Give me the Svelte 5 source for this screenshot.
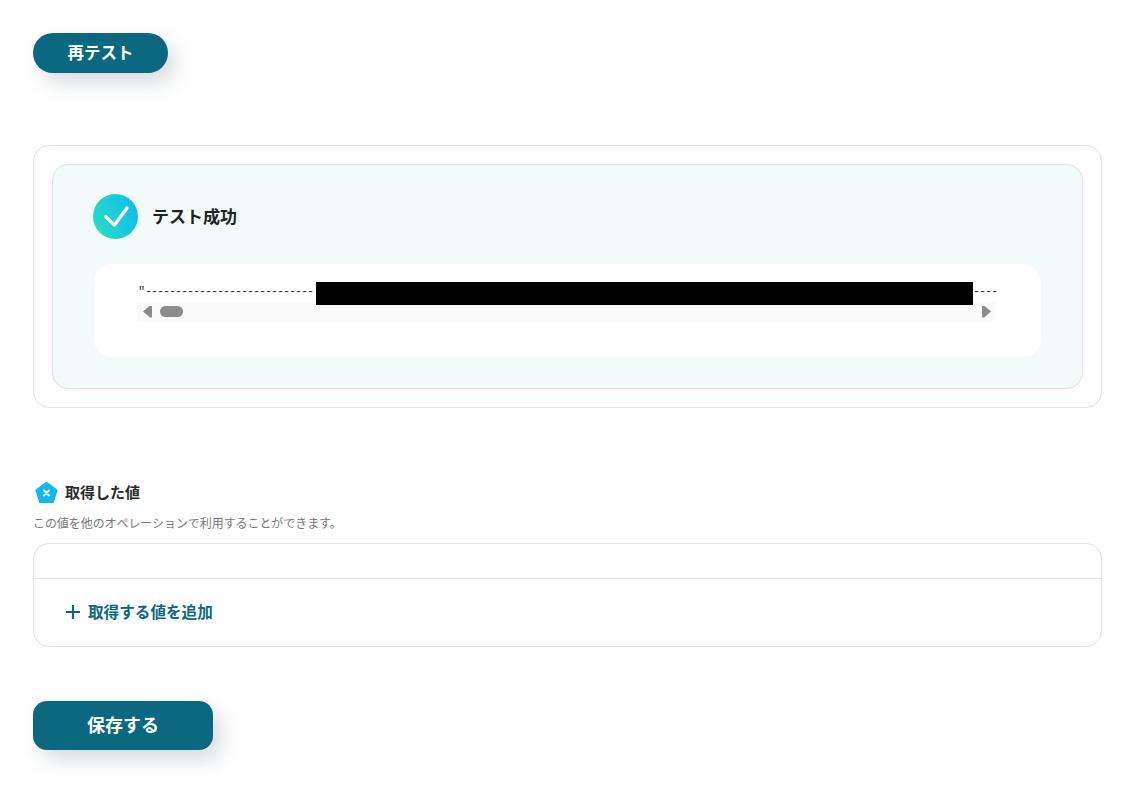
<script lang="ts">
  // 取得した値のリスト（テスト直後は空）
  let values: string[] = $state([]);
  const dashesLeft = "-".repeat(28);
  const dashesRight = "-".repeat(4);
</script>

<main class="page">
  <button class="btn retest">再テスト</button>

  <section class="result-card">
    <div class="result-inner">
      <div class="result-head">
        <svg class="check" viewBox="0 0 45 45" width="45" height="45" aria-hidden="true">
          <defs>
            <linearGradient id="ok" x1="0" y1="0.7" x2="1" y2="0.3">
              <stop offset="0" stop-color="#2bdcc4" />
              <stop offset="1" stop-color="#0fbcee" />
            </linearGradient>
          </defs>
          <circle cx="22.5" cy="22.5" r="22.5" fill="url(#ok)" />
          <path d="M12.7 22.7 L21.5 31 L34 14" fill="none" stroke="#fff" stroke-width="3.4" stroke-linecap="round" stroke-linejoin="round" />
        </svg>
        <h2>テスト成功</h2>
      </div>

      <div class="code-box">
        <div class="code-scroll">
          <div class="code-line">
            <span class="quote">"</span><span class="dash left-run">{dashesLeft}</span><span class="redacted"></span><span class="dash">{dashesRight}</span>
          </div>
          <div class="scrollbar">
            <span class="arrow left"></span>
            <span class="thumb"></span>
            <span class="arrow right"></span>
          </div>
        </div>
      </div>
    </div>
  </section>

  <section class="values">
    <div class="values-head">
      <svg viewBox="0 0 24 24" width="24" height="24" aria-hidden="true">
        <path d="M12.5 3.5 L22 10.5 L18.5 21.5 L6.5 21.5 L3 10.5 Z" fill="#12b9ee" stroke="#12b9ee" stroke-width="3" stroke-linejoin="round" />
        <path d="M10 10.5 L15 15.5 M15 10.5 L10 15.5" stroke="#fff" stroke-width="1.8" stroke-linecap="round" />
      </svg>
      <h3>取得した値</h3>
    </div>
    <p class="hint">この値を他のオペレーションで利用することができます。</p>

    <div class="values-box">
      <div class="values-list">
        {#each values as v}
          <div>{v}</div>
        {/each}
      </div>
      <div class="add-row">
        <svg viewBox="0 0 16 16" width="16" height="16" aria-hidden="true">
          <path d="M8 1 V15 M1 8 H15" stroke="#0b6880" stroke-width="2.2" />
        </svg>
        <span>取得する値を追加</span>
      </div>
    </div>
  </section>

  <button class="btn save">保存する</button>
</main>

<style>
  :global(body) {
    background: #fff;
  }

  .page {
    box-sizing: border-box;
    width: 1142px;
    height: 797px;
    padding: 33px 40px 0 33px;
    font-family: "Noto Sans CJK JP", "Noto Sans", sans-serif;
    color: #222;
    overflow: hidden;
  }

  .btn {
    display: block;
    border: none;
    background: #0b6880;
    color: #fff;
    font-family: inherit;
    font-weight: 700;
    cursor: pointer;
    box-shadow: 8px 10px 20px rgba(40, 60, 80, 0.18);
  }

  .retest {
    width: 135px;
    height: 40px;
    padding: 0 0 2px;
    border-radius: 20px;
    font-size: 16.5px;
  }

  .result-card {
    box-sizing: border-box;
    margin-top: 72px;
    height: 263px;
    padding: 18px;
    border: 1px solid #e2e2e2;
    border-radius: 16px;
  }

  .result-inner {
    box-sizing: border-box;
    height: 225px;
    padding: 29px 41px 0 40px;
    background: #f2fafa;
    border: 1px solid #e2e2e2;
    border-radius: 16px;
  }

  .result-head {
    display: flex;
    align-items: center;
    gap: 14px;
  }

  .result-head h2 {
    margin: 0 0 2px;
    font-size: 17px;
    font-weight: 600;
    color: #222;
  }

  .code-box {
    box-sizing: border-box;
    height: 93px;
    margin: 25px 0 0 1px;
    padding: 18px 44px 0 43px;
    background: #fff;
    border-radius: 18px;
  }

  .code-scroll {
    width: 860px;
  }

  .code-line {
    display: flex;
    align-items: flex-start;
    height: 20px;
    font-family: "Liberation Mono", monospace;
    font-size: 12px;
    line-height: 20px;
    color: #333;
  }

  .quote {
    flex: none;
    width: 7px;
    padding-left: 1px;
  }

  .dash {
    flex: none;
    letter-spacing: -1.2px;
  }

  .left-run {
    width: 171px;
  }

  /* 黒塗りはスクロールバーの上に少しかぶる */
  .redacted {
    position: relative;
    z-index: 1;
    flex: none;
    width: 657px;
    height: 23px;
    background: #000;
  }

  .scrollbar {
    display: flex;
    align-items: center;
    height: 19px;
    padding: 0 6px;
    background: #fafafa;
  }

  .arrow {
    width: 9px;
    height: 12px;
    background: #8a8a8a;
  }

  .arrow.left {
    clip-path: polygon(0 50%, 78% 0, 100% 0, 100% 100%, 78% 100%);
  }

  .arrow.right {
    margin-left: auto;
    clip-path: polygon(100% 50%, 22% 0, 0 0, 0 100%, 22% 100%);
  }

  .thumb {
    width: 23px;
    height: 11px;
    margin-left: 8px;
    border-radius: 6px;
    background: #8c8c8c;
  }

  .values {
    margin-top: 72px;
  }

  .values-head {
    display: flex;
    align-items: center;
    gap: 7px;
    padding-left: 1px;
  }

  .values-head h3 {
    margin: 0;
    font-size: 15px;
    font-weight: 600;
    line-height: 24px;
    color: #2b2b2b;
  }

  .hint {
    margin: 10px 0 0;
    font-size: 12px;
    letter-spacing: -0.07px;
    line-height: 18px;
    color: #777;
  }

  .values-box {
    margin-top: 11px;
    height: 104px;
    box-sizing: border-box;
    border: 1px solid #e2e2e2;
    border-radius: 16px;
  }

  .values-list {
    height: 34px;
    border-bottom: 1px solid #e2e2e2;
  }

  .add-row {
    display: flex;
    align-items: center;
    gap: 7px;
    height: 66px;
    padding-left: 31px;
    color: #0b6880;
    font-size: 15.6px;
    font-weight: 600;
  }

  .add-row span {
    margin-bottom: 2px;
  }

  .save {
    width: 180px;
    height: 49px;
    margin-top: 54px;
    padding: 0 0 4px;
    border-radius: 14px;
    font-size: 18px;
  }
</style>
